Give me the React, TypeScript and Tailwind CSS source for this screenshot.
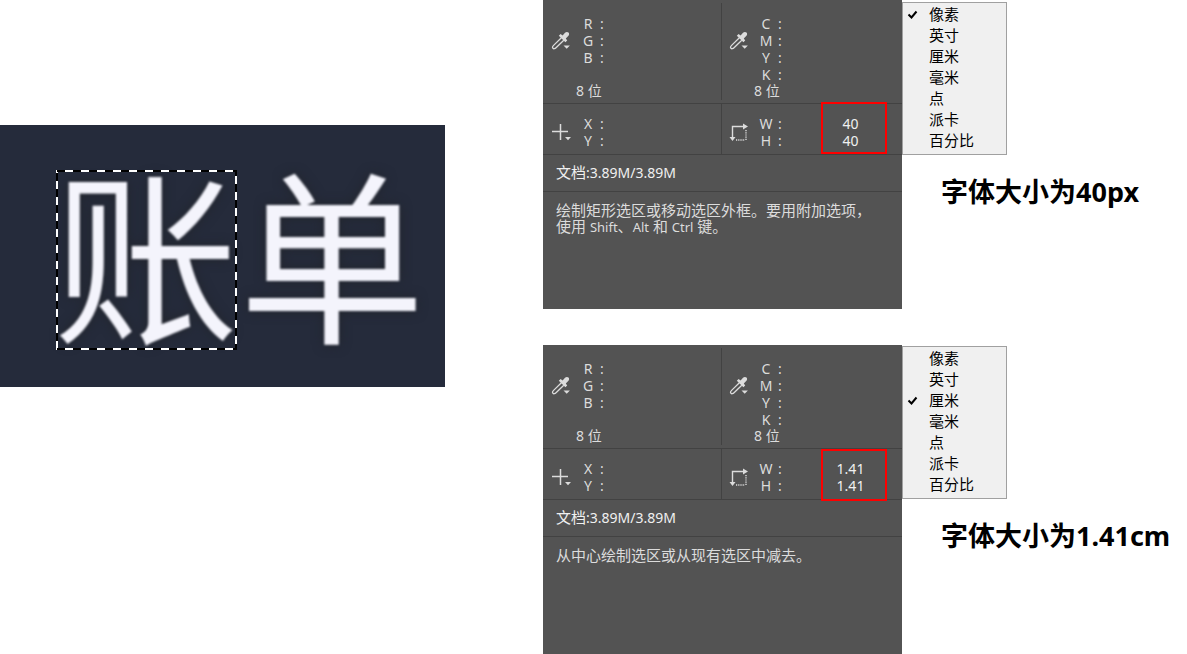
import React from "react";

const UI = "font-['Noto_Sans','Noto_Sans_CJK_SC',sans-serif]";

function Eyedropper() {
  return (
    <svg width="20" height="20" viewBox="0 0 20 20" aria-hidden="true">
      <path d="M10.4 6.800 2.600 14.400c-1 1-1.200 2.400-.6 3s2 .4 3-.6l7.800-7.600" fill="none" stroke="#dcdcdc" strokeWidth="1.300" />
      <path d="M7.800 4.800 9.600 3l2 1.400L14 1.800c1-1.100 2.600-1.200 3.500-.3s.8 2.500-.3 3.500L14.800 7.400l1.400 2-1.800 1.800z" fill="#dcdcdc" />
      <path d="M12.500 14.500h6.400l-3.200 3.300z" fill="#dcdcdc" />
    </svg>
  );
}

function Crosshair() {
  return (
    <svg width="20" height="20" viewBox="0 0 20 20" aria-hidden="true">
      <path d="M1 8.500h16M9.500 1v16" stroke="#dcdcdc" strokeWidth="1.500" />
      <path d="M14 14h6l-3 3.200z" fill="#dcdcdc" />
    </svg>
  );
}

function Bounds() {
  return (
    <svg width="20" height="20" viewBox="0 0 20 20" aria-hidden="true">
      <path d="M3.500 15V3.500H15" fill="none" stroke="#dcdcdc" strokeWidth="1.400" />
      <path d="M14 .5 19 3.500 14 6.500zM.5 14h6l-3 4z" fill="#dcdcdc" />
      <path d="M17 7v11M7 17h9" fill="none" stroke="#dcdcdc" strokeWidth="1.400" strokeDasharray="1.200 1" />
    </svg>
  );
}

function Labels({ names }: { names: string[] }) {
  return (
    <dl>
      {names.map((n) => (
        <div key={n} className="flex h-[17px] items-center leading-[17px]">
          <dt className="flex items-center">
            <span className="w-4 text-center">{n}</span>
            <span className="ml-[2px] w-2 text-center">:</span>
          </dt>
        </div>
      ))}
    </dl>
  );
}

function ColorCell({ names }: { names: string[] }) {
  return (
    <div className="min-w-0 flex-1 pt-[15px] pl-2">
      <div className="flex">
        <div className="mt-4 w-5 shrink-0">
          <Eyedropper />
        </div>
        <div className="h-[68px] pl-[9px]">
          <Labels names={names} />
        </div>
      </div>
      <p className="pl-[25px] leading-[15px]">8 位</p>
    </div>
  );
}

function Divider({ span }: { span: string }) {
  return <div className={`-mr-px w-px shrink-0 bg-[#424242] ${span}`} />;
}

function InfoPanel({ size, tip, frame }: { size: string; tip: React.ReactNode; frame: string }) {
  return (
    <section className="flex h-[309px] w-[359px] shrink-0 flex-col bg-[#535353] text-sm text-[#dcdcdc]">
      <div className="grid h-[103px] grid-cols-[178px_1fr]">
        <ColorCell names={["R", "G", "B"]} />
        <div className="flex">
          <Divider span="my-[3px]" />
          <ColorCell names={["C", "M", "Y", "K"]} />
        </div>
      </div>
      <div className="grid h-[52px] grid-cols-[178px_1fr] border-y border-[#424242]">
        <div className="flex pt-[11px] pl-2">
          <div className="mt-2 w-5 shrink-0">
            <Crosshair />
          </div>
          <div className="pl-[9px]">
            <Labels names={["X", "Y"]} />
          </div>
        </div>
        <div className="relative flex">
          <Divider span="" />
          <div className="flex flex-1 pt-[11px] pl-2">
            <div className="mt-2 w-5 shrink-0">
              <Bounds />
            </div>
            <div className="pl-[9px]">
              <Labels names={["W", "H"]} />
            </div>
            <div className="ml-[34px] w-[65px] text-center leading-[17px] text-[#f0f0f0]">
              <p>{size}</p>
              <p>{size}</p>
            </div>
          </div>
          <div className={`absolute right-[15px] h-[52px] w-[66px] border-2 border-[#ff0000] ${frame}`} />
        </div>
      </div>
      <p className="flex h-[37px] items-center border-b border-[#424242] pl-[13px] text-[#f0f0f0]">
        <span className="text-[15px]">文档</span>:3.89M/3.89M
      </p>
      <p className="pt-[10px] pl-[13px] text-[15px] leading-4">{tip}</p>
    </section>
  );
}

const UNITS = ["像素", "英寸", "厘米", "毫米", "点", "派卡", "百分比"];

function UnitMenu({ selected }: { selected: string }) {
  return (
    <div role="menu" className="w-[105px] border border-[#a0a0a0] bg-[#f0f0f0] pt-px pb-[3px]">
      {UNITS.map((u) => (
        <button
          key={u}
          type="button"
          role="menuitemradio"
          aria-checked={u === selected}
          className="flex h-[21px] w-full items-center text-left text-[15px] text-black"
        >
          <span className="w-[26px] pl-1">
            {u === selected && (
              <svg width="12" height="12" viewBox="0 0 12 12" aria-hidden="true">
                <path d="M1.500 5.500 4.500 8.500 9.500 2.500" fill="none" stroke="#000" strokeWidth="2" />
              </svg>
            )}
          </span>
          {u}
        </button>
      ))}
    </div>
  );
}

interface ExampleProps {
  size: string;
  tip: React.ReactNode;
  frame: string;
  unit: string;
  caption: string;
  menuTop: string;
}

function Example({ size, tip, frame, unit, caption, menuTop }: ExampleProps) {
  return (
    <div className="flex">
      <InfoPanel size={size} tip={tip} frame={frame} />
      <div className={`flex-1 ${menuTop}`}>
        <UnitMenu selected={unit} />
        <h2 className="mt-[17px] pl-[39px] text-[27px] leading-10 font-bold whitespace-nowrap text-black">{caption}</h2>
      </div>
    </div>
  );
}

export default function App() {
  return (
    <main className={`flex min-h-screen bg-white ${UI}`}>
      <div className="min-w-0 flex-1 pt-[125px] pr-[98px]">
        <div className="relative h-[262px] overflow-hidden bg-[#252b3b] pl-[53px]">
          <p className="pt-[41px] text-[186px] leading-[184px] whitespace-nowrap text-[#f4f4fc] blur-[1px] [text-shadow:0_0_12px_#22252b]">
            账单
          </p>
          <svg className="absolute top-[45px] left-[56px]" width="182" height="180" viewBox="0 0 182 180" aria-hidden="true">
            <rect x="1" y="1" width="179" height="178" fill="none" stroke="#fff" strokeWidth="2" />
            <rect x="1" y="1" width="179" height="178" fill="none" stroke="#000" strokeWidth="2" strokeDasharray="8 8" />
          </svg>
        </div>
      </div>
      <div className="flex w-[644px] shrink-0 flex-col gap-9">
        <Example
          size="40"
          unit="像素"
          caption="字体大小为40px"
          frame="-top-[2px]"
          menuTop="pt-[2px]"
          tip={
            <>
              绘制矩形选区或移动选区外框。要用附加选项，
              <br />
              使用 <span className="text-[13px]">Shift</span>、<span className="text-[13px]">Alt</span> 和{" "}
              <span className="text-[13px]">Ctrl</span> 键。
            </>
          }
        />
        <Example
          size="1.41"
          unit="厘米"
          caption="字体大小为1.41cm"
          frame="top-0"
          menuTop="pt-px"
          tip="从中心绘制选区或从现有选区中减去。"
        />
      </div>
    </main>
  );
}
